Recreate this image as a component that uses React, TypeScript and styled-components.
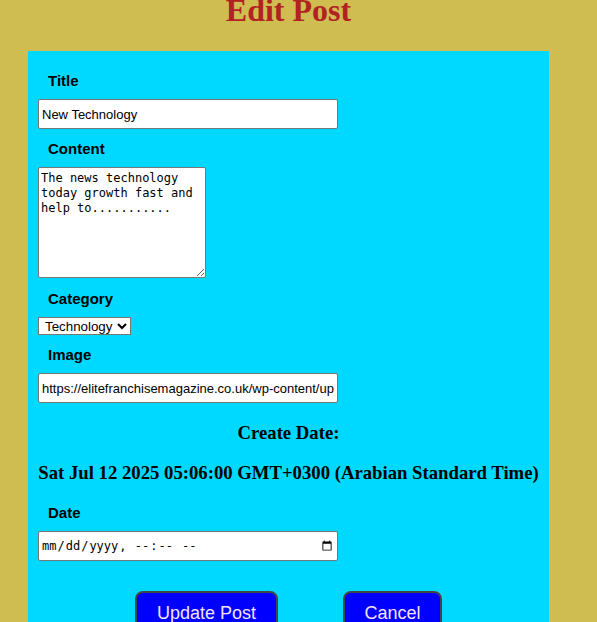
import React from "react";
import styled, { createGlobalStyle } from "styled-components";

const Global = createGlobalStyle`
  html, body { margin: 0; padding: 0; background: #d0bd51; }
  body { overflow: hidden; }
`;

const Page = styled.div`
  width: 521px;
  margin-left: 28px;
`;

const Heading = styled.h1`
  margin: -8px 0 22px;
  text-align: center;
  font-family: "Liberation Serif", serif;
  font-size: 32px;
  font-weight: bold;
  line-height: 37px;
  color: #b22222;
`;

const Panel = styled.form`
  background: #00d9ff;
  padding: 11px 10px 40px;
  min-height: 600px;
  box-sizing: border-box;
`;

const Label = styled.label<{ $top?: number }>`
  display: block;
  margin: ${(p) => p.$top ?? 10}px 0 10px 10px;
  font-family: "Liberation Sans", Arial, sans-serif;
  font-weight: bold;
  font-size: 15px;
  line-height: 17px;
  color: #000;
`;

const TextInput = styled.input`
  display: block;
  box-sizing: border-box;
  width: 300px;
  height: 30px;
  margin: 0;
  padding: 1px 3px;
  border: 1px solid #767676;
  border-radius: 2px;
  background: #fff;
  font-family: "Liberation Sans", Arial, sans-serif;
  font-size: 13px;
  color: #000;
`;

const DateInput = styled(TextInput)`
  font-family: "DejaVu Sans Mono", "Liberation Mono", monospace;
  font-size: 12px;
  padding: 1px 2px;
`;

const TextArea = styled.textarea`
  display: block;
  box-sizing: border-box;
  width: 168px;
  height: 111px;
  margin: 0;
  padding: 3px 2px 2px;
  border: 1px solid #767676;
  border-radius: 2px;
  background: #fff;
  font-family: "DejaVu Sans Mono", "Liberation Mono", monospace;
  font-size: 12px;
  line-height: 15px;
  color: #000;
`;

const Select = styled.select`
  display: block;
  box-sizing: border-box;
  width: 93px;
  height: 18px;
  margin: 0;
  padding: 0 0 0 2px;
  border: 1px solid #767676;
  border-radius: 0;
  background: #fff;
  font-family: "Liberation Sans", Arial, sans-serif;
  font-size: 13.33px;
  color: #000;
`;

const Info = styled.h3<{ $gap: number }>`
  margin: ${(p) => p.$gap}px 0 0;
  text-align: center;
  font-family: "Liberation Serif", serif;
  font-weight: bold;
  font-size: 18.72px;
  line-height: 22px;
  color: #000;
  white-space: nowrap;
`;

const Buttons = styled.div`
  display: flex;
  justify-content: center;
  gap: 65px;
  margin-top: 30px;
`;

const Button = styled.button<{ $w: number }>`
  width: ${(p) => p.$w}px;
  height: 44px;
  box-sizing: border-box;
  border: 2px solid #454545;
  border-radius: 8px;
  background: #0000ff;
  color: #f4e4f6;
  font-family: "Liberation Sans", Arial, sans-serif;
  font-size: 18px;
  padding: 0;
`;

export default function App() {
  return (
    <>
      <Global />
      <Page>
        <Heading>Edit Post</Heading>
        <Panel onSubmit={(e) => e.preventDefault()}>
          <Label>Title</Label>
          <TextInput type="text" defaultValue="New Technology" />
          <Label $top={11}>Content</Label>
          <TextArea
            defaultValue={"The news technology today growth fast and help to..........."}
          />
          <Label $top={12}>Category</Label>
          <Select defaultValue="Technology">
            <option>Technology</option>
            <option>Science</option>
            <option>Sports</option>
          </Select>
          <Label $top={11}>Image</Label>
          <TextInput
            type="text"
            defaultValue="https://elitefranchisemagazine.co.uk/wp-content/uploads/2023/technology.jpg"
          />
          <Info $gap={19}>Create Date:</Info>
          <Info $gap={18}>Sat Jul 12 2025 05:06:00 GMT+0300 (Arabian Standard Time)</Info>
          <Label $top={20}>Date</Label>
          <DateInput type="datetime-local" />
          <Buttons>
            <Button $w={143} type="submit">Update Post</Button>
            <Button $w={99} type="button">Cancel</Button>
          </Buttons>
        </Panel>
      </Page>
    </>
  );
}
